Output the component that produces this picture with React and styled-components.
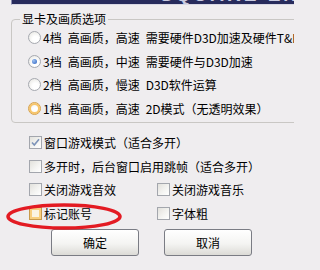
import React from 'react'
import styled, { createGlobalStyle, css } from 'styled-components'

const GlobalStyle = createGlobalStyle`
  html, body {
    margin: 0;
    padding: 0;
    background: #efedef;
  }
  body {
    font-family: "Noto Sans CJK SC", "Liberation Sans", sans-serif;
    font-size: 12px;
    color: #000;
  }
`

const Dialog = styled.div`
  position: relative;
  width: 294px;
  height: 270px;
  overflow: hidden;
  background: #efedef;
`

const Banner = styled.div`
  margin-left: 11px;
  height: 4px;
  background: #272b5c;
  border-left: 1px solid #8a8cb0;
  border-bottom: 1px solid #d8d8e4;
  overflow: hidden;
  display: flex;
  justify-content: flex-end;
`

const BannerText = styled.span`
  margin-top: -14px;
  margin-right: -30px;
  font-family: "Liberation Sans", sans-serif;
  font-weight: bold;
  font-size: 19px;
  letter-spacing: 3px;
  color: #c9cbe0;
  line-height: 18px;
`

const Group = styled.fieldset`
  margin: 7px 0 0 11px;
  padding: 0 0 2px 16px;
  width: 320px;
  border: 1px solid #c9c7c4;
  border-radius: 4px;
`

const Legend = styled.legend`
  margin-left: -8px;
  padding: 0 2px;
  line-height: 14px;
  font-size: 12px;
`

const Row = styled.label`
  display: flex;
  align-items: center;
  gap: 2px;
  height: ${p => p.$h || 23.5}px;
  white-space: nowrap;
`

const Parts = styled.span`
  display: flex;
  gap: 6px;
`

const RadioDot = styled.span`
  flex: none;
  box-sizing: border-box;
  width: 13px;
  height: 13px;
  border-radius: 50%;
  border: 1px solid #a6a9b0;
  background: radial-gradient(circle at 60% 65%, #ffffff 30%, #e4e3de 100%);
  display: flex;
  align-items: center;
  justify-content: center;
  ${p => p.$hover && css`
    border-color: #d8a24a;
    box-shadow: inset 0 0 0 2px #f7c56a;
  `}
  ${p => p.$checked && css`
    &::after {
      content: '';
      width: 5px;
      height: 5px;
      border-radius: 50%;
      background: radial-gradient(circle at 35% 35%, #9cc0f0, #2a5fc0);
    }
  `}
`

const Box = styled.span`
  flex: none;
  box-sizing: border-box;
  width: 13px;
  height: 13px;
  border: 1px solid #a3a6ad;
  background: linear-gradient(135deg, #e2e1dc 0%, #f5f5f3 60%, #ffffff 100%);
  display: flex;
  align-items: center;
  justify-content: center;
  ${p => p.$hover && css`
    border-color: #c89a4c;
    box-shadow: inset 0 0 0 2px #f8cf7e;
    background: #fbf4e2;
  `}
`

const Checks = styled.div`
  padding: 8px 0 0 29px;
  display: grid;
  grid-template-columns: 128px auto;
`

const Wide = styled.div`
  grid-column: 1 / span 2;
`

const Buttons = styled.div`
  display: flex;
  gap: 25px;
  padding: 4px 0 0 51px;
`

const Button = styled.button`
  box-sizing: border-box;
  width: 88px;
  height: 27px;
  border: 1px solid #7a7c84;
  border-radius: 3px;
  background: linear-gradient(#ffffff 0%, #f4f4f2 55%, #dcdbd6 100%);
  font-family: "Noto Sans CJK SC", sans-serif;
  font-size: 12px;
  color: #000;
  padding: 0;
`

const Mark = styled.svg`
  position: absolute;
  left: 5px;
  top: 202px;
  pointer-events: none;
`

const Check = () => (
  <svg width="9" height="9" viewBox="0 0 9 9">
    <path d="M1 4.5 L3.3 7 L8 1.2" fill="none" stroke="#7d93b8" strokeWidth="1.6" />
  </svg>
)

const radios = [
  { parts: ['4档', '高画质，高速', '需要硬件D3D加速及硬件T&L'] },
  { parts: ['3档', '高画质，中速', '需要硬件与D3D加速'], checked: true },
  { parts: ['2档', '高画质，慢速', 'D3D软件运算'] },
  { parts: ['1档', '高画质，高速', '2D模式（无透明效果）'], hover: true },
]

const CheckRow = ({ label, checked, hover }) => (
  <Row $h={23.5}>
    <Box $hover={hover}>{checked && <Check />}</Box>
    <span>{label}</span>
  </Row>
)

export default function App() {
  return (
    <Dialog>
      <GlobalStyle />
      <Banner>
        <BannerText>SQUARE ENIX</BannerText>
      </Banner>
      <Group>
        <Legend>显卡及画质选项</Legend>
        {radios.map((r, i) => (
          <Row key={i}>
            <RadioDot $checked={r.checked} $hover={r.hover} />
            <Parts>
              {r.parts.map(p => <span key={p}>{p}</span>)}
            </Parts>
          </Row>
        ))}
      </Group>
      <Checks>
        <Wide><CheckRow label="窗口游戏模式（适合多开）" checked /></Wide>
        <Wide><CheckRow label="多开时，后台窗口启用跳帧（适合多开）" /></Wide>
        <CheckRow label="关闭游戏音效" />
        <CheckRow label="关闭游戏音乐" />
        <CheckRow label="标记账号" hover />
        <CheckRow label="字体粗" />
      </Checks>
      <Buttons>
        <Button>确定</Button>
        <Button>取消</Button>
      </Buttons>
      <Mark width="120" height="30" viewBox="0 0 120 30">
        <ellipse cx="59" cy="14.5" rx="56" ry="11.5" fill="none" stroke="#e31b23" strokeWidth="3.5" />
      </Mark>
    </Dialog>
  )
}
